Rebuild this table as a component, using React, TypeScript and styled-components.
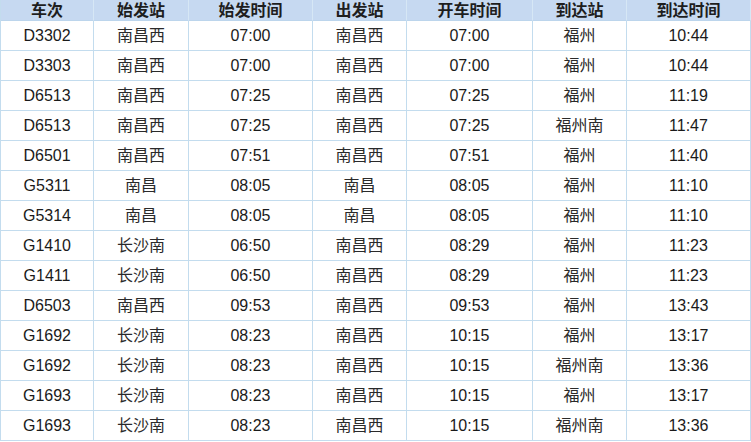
import React from "react";
import styled, { createGlobalStyle } from "styled-components";

const GlobalStyle = createGlobalStyle`
  html, body {
    margin: 0;
    padding: 0;
    background: #ffffff;
  }
  body {
    font-family: "Liberation Sans", "Noto Sans CJK SC", Arial, sans-serif;
  }
`;

const widths = [93, 95, 124, 94, 126, 94, 124];

const Table = styled.div`
  display: grid;
  grid-template-columns: ${widths.map((w) => `${w}px`).join(" ")};
  grid-auto-rows: 30px;
  grid-template-rows: 21px;
  width: 751px;
  box-sizing: border-box;
  border-left: 1px solid #c3dcee;
`;

const HeadCell = styled.div`
  box-sizing: border-box;
  background: #c6d9f1;
  border-right: 1px solid #d6e7f5;
  border-bottom: 1px solid #bcd5ec;
  display: flex;
  align-items: center;
  justify-content: center;
  font-family: "Liberation Sans", "Noto Sans CJK SC", sans-serif;
  font-weight: 700;
  font-size: 16px;
  color: #1e1e1e;
  line-height: 1;
  padding-top: 1px;
`;

const Cell = styled.div<{ $cjk?: boolean }>`
  box-sizing: border-box;
  background: #ffffff;
  border-right: 1px solid #c3dcee;
  border-bottom: 1px solid #c3dcee;
  display: flex;
  align-items: center;
  justify-content: center;
  font-family: "Liberation Sans", "Noto Sans CJK SC", sans-serif;
  font-size: 16px;
  color: ${(p) => (p.$cjk ? "#2a2a2a" : "#1a1a1a")};
  line-height: 1;
`;

const headers = ["车次", "始发站", "始发时间", "出发站", "开车时间", "到达站", "到达时间"];

const rows: string[][] = [
  ["D3302", "南昌西", "07:00", "南昌西", "07:00", "福州", "10:44"],
  ["D3303", "南昌西", "07:00", "南昌西", "07:00", "福州", "10:44"],
  ["D6513", "南昌西", "07:25", "南昌西", "07:25", "福州", "11:19"],
  ["D6513", "南昌西", "07:25", "南昌西", "07:25", "福州南", "11:47"],
  ["D6501", "南昌西", "07:51", "南昌西", "07:51", "福州", "11:40"],
  ["G5311", "南昌", "08:05", "南昌", "08:05", "福州", "11:10"],
  ["G5314", "南昌", "08:05", "南昌", "08:05", "福州", "11:10"],
  ["G1410", "长沙南", "06:50", "南昌西", "08:29", "福州", "11:23"],
  ["G1411", "长沙南", "06:50", "南昌西", "08:29", "福州", "11:23"],
  ["D6503", "南昌西", "09:53", "南昌西", "09:53", "福州", "13:43"],
  ["G1692", "长沙南", "08:23", "南昌西", "10:15", "福州", "13:17"],
  ["G1692", "长沙南", "08:23", "南昌西", "10:15", "福州南", "13:36"],
  ["G1693", "长沙南", "08:23", "南昌西", "10:15", "福州", "13:17"],
  ["G1693", "长沙南", "08:23", "南昌西", "10:15", "福州南", "13:36"],
];

const cjkCols = new Set([1, 3, 5]);

export default function App() {
  return (
    <>
      <GlobalStyle />
      <Table>
        {headers.map((h) => (
          <HeadCell key={h}>{h}</HeadCell>
        ))}
        {rows.map((r, ri) =>
          r.map((c, ci) => (
            <Cell key={`${ri}-${ci}`} $cjk={cjkCols.has(ci)}>
              {c}
            </Cell>
          ))
        )}
      </Table>
    </>
  );
}
